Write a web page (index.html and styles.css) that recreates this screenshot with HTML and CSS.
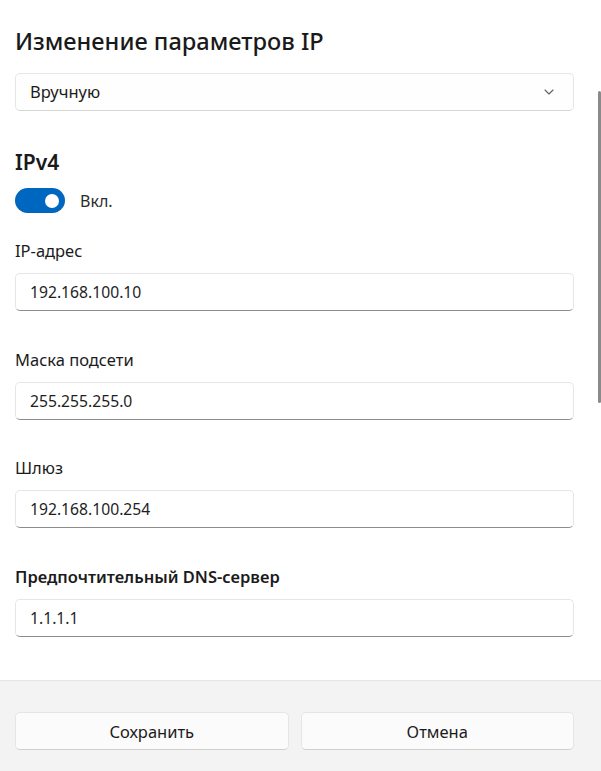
FILE: index.html
```html
<!DOCTYPE html>
<html lang="ru">
<head>
<meta charset="utf-8">
<title>Изменение параметров IP</title>
<link rel="stylesheet" href="styles.css">
</head>
<body>
<div class="dialog">
  <div class="content">
    <h1 class="title">Изменение параметров IP</h1>
    <div class="select">
      <span class="select-text">Вручную</span>
      <svg class="chevron" width="12" height="8" viewBox="0 0 12 8"><path d="M2 2 L6 6 L10 2" fill="none" stroke="#606060" stroke-width="1.1" stroke-linecap="round" stroke-linejoin="round"/></svg>
    </div>
    <h2 class="section">IPv4</h2>
    <div class="toggle-row">
      <span class="toggle"><span class="knob"></span></span>
      <span class="toggle-label">Вкл.</span>
    </div>
    <div class="fields">
      <div class="field">
        <div class="label">IP-адрес</div>
        <div class="input">192.168.100.10</div>
      </div>
      <div class="field">
        <div class="label">Маска подсети</div>
        <div class="input">255.255.255.0</div>
      </div>
      <div class="field">
        <div class="label">Шлюз</div>
        <div class="input">192.168.100.254</div>
      </div>
      <div class="field">
        <div class="label label-strong">Предпочтительный DNS-сервер</div>
        <div class="input">1.1.1.1</div>
      </div>
    </div>
    <div class="scrollbar"></div>
  </div>
  <div class="footer">
    <button class="btn">Сохранить</button>
    <button class="btn">Отмена</button>
  </div>
</div>
</body>
</html>
```
FILE: styles.css
```css
* { box-sizing: border-box; }
html, body {
  margin: 0;
  padding: 0;
  background: #ffffff;
}
body {
  font-family: "Noto Sans", "Open Sans", sans-serif;
  color: #1b1b1b;
  width: 601px;
  height: 771px;
  overflow: hidden;
}
.dialog {
  display: flex;
  flex-direction: column;
  height: 771px;
}
.content {
  position: relative;
  flex: 1;
  padding: 26px 27px 0 15px;
  background: #ffffff;
}
.title {
  margin: 0;
  font-size: 23.6px;
  line-height: 30px;
  font-weight: 500;
  color: #1a1a1a;
}
.select {
  margin-top: 17px;
  height: 38px;
  border: 1px solid #e6e6e6;
  border-bottom-color: #d6d6d6;
  border-radius: 5px;
  background: #fefefe;
  display: flex;
  align-items: center;
  justify-content: space-between;
  padding: 0 18px 0 14px;
}
.select-text {
  font-size: 16.5px;
  line-height: 20px;
}
.chevron { display: block; }
.section {
  margin: 37px 0 0 0;
  font-size: 21px;
  line-height: 28px;
  font-weight: 600;
  color: #1a1a1a;
}
.toggle-row {
  margin-top: 12px;
  display: flex;
  align-items: center;
  gap: 15px;
  height: 25px;
}
.toggle {
  width: 50px;
  height: 25px;
  border-radius: 13px;
  background: #0067c0;
  display: flex;
  align-items: center;
  justify-content: flex-end;
  padding-right: 6px;
}
.knob {
  width: 14px;
  height: 14px;
  border-radius: 50%;
  background: #ffffff;
}
.toggle-label {
  font-size: 16px;
  line-height: 20px;
  color: #2b2b2b;
}
.fields {
  margin-top: 28px;
  display: flex;
  flex-direction: column;
  gap: 38.7px;
}
.label {
  font-size: 16.5px;
  line-height: 20px;
  margin-bottom: 12px;
  color: #1b1b1b;
}
.label-strong { font-weight: 600; }
.input {
  height: 38px;
  border: 1px solid #e6e6e6;
  border-bottom: 1px solid #8c8c8c;
  border-radius: 5px;
  background: #ffffff;
  padding: 0 14px;
  display: flex;
  align-items: center;
  font-size: 15.7px;
  line-height: 20px;
  color: #1e1e1e;
}
.scrollbar {
  position: absolute;
  right: 0;
  top: 91px;
  width: 3px;
  height: 312px;
  border-radius: 2px;
  background: #8a8a8a;
}
.footer {
  height: 91px;
  flex: none;
  background: #f3f3f3;
  border-top: 1px solid #e5e5e5;
  padding: 31px 27px 0 15px;
  display: grid;
  grid-template-columns: 1fr 1fr;
  column-gap: 12px;
  align-items: start;
}
.btn {
  height: 38px;
  border: 1px solid #e5e5e5;
  border-bottom-color: #cfcfcf;
  border-radius: 5px;
  background: #fbfbfb;
  font-family: "Noto Sans", "Open Sans", sans-serif;
  font-size: 16.5px;
  color: #1b1b1b;
  padding: 0;
}
```
